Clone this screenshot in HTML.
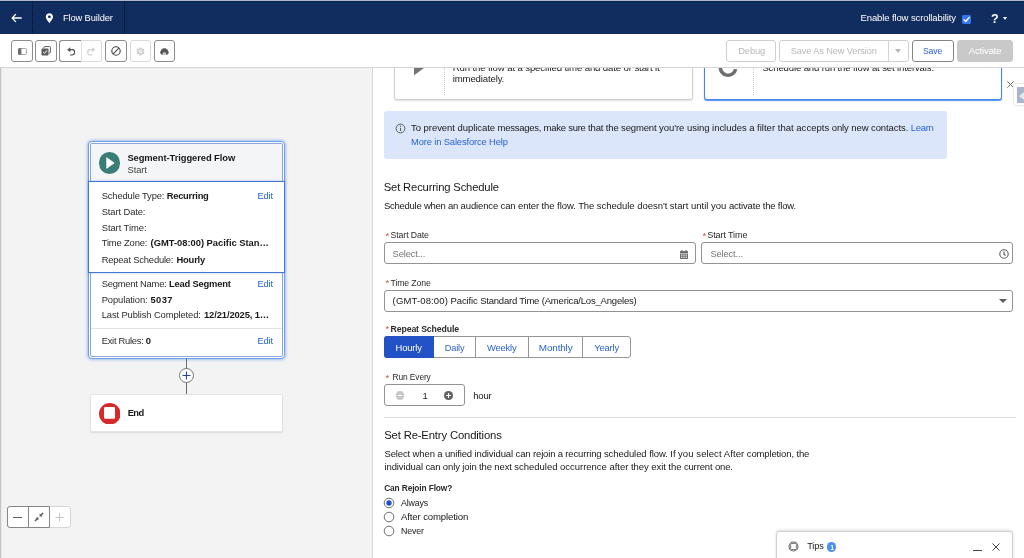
<!DOCTYPE html>
<html>
<head>
<meta charset="utf-8">
<title>Flow Builder</title>
<style>
*{box-sizing:border-box;margin:0;padding:0}
html,body{width:1024px;height:558px;overflow:hidden;background:#fff;font-family:"Liberation Sans",sans-serif;font-size:9px;color:#181818}
#root{position:absolute;left:0;top:0;width:1024px;height:558px;will-change:transform;opacity:.999}
.abs{position:absolute}
.t{position:absolute;white-space:nowrap;display:block}
#hdr{position:absolute;left:0;top:0;width:1024px;height:34px;background:#112c5e;border-top:1px solid #b1b8c7;box-shadow:inset 0 1px 0 #08255a}
#hdr .sep{position:absolute;top:0;height:33px;width:0;border-left:1px dotted #050f2a}
#tb{position:absolute;left:0;top:34px;width:1024px;height:34px;background:#fff;border-bottom:1px solid #d4d4d4}
.ib{position:absolute;top:6.2px;height:21.6px;border:1px solid #8c8c8c;border-radius:3px;background:#fff}
.ib.dis{border-color:#dadada}
.btn{position:absolute;top:6.2px;height:21.4px;border:1px solid #cfcfcf;border-radius:3px;background:#fff}
#canvas{position:absolute;left:0;top:68px;width:372px;height:490px;background:#f3f3f3;overflow:hidden;box-shadow:inset 1px 0 0 #c4c4c4, inset 2px 0 0 #e8e8e8}
#panel{position:absolute;left:372px;top:68px;width:652px;height:490px;background:#fff;overflow:hidden;box-shadow:inset 1px 0 0 #d8d8d8}
</style>
</head>
<body>
<div id="root">
<div id="hdr">
<div class="sep" style="left:32px"></div><div class="sep" style="left:124px"></div>
<svg class="abs" style="left:10.6px;top:11.8px" width="12" height="10" viewBox="0 0 12 10"><path d="M4.6 1.4 L1.2 5 L4.6 8.6 M1.4 5 H10.2" fill="none" stroke="#fff" stroke-width="1.3" stroke-linecap="round" stroke-linejoin="round"/></svg>
<svg class="abs" style="left:44.9px;top:12.1px" width="8.8" height="10.6" viewBox="0 0 9 12"><path d="M4.5 0.3C2.2 0.3 0.4 2.1 0.4 4.3c0 2.6 2.9 5.6 4.1 7.2 1.2-1.6 4.1-4.6 4.1-7.2C8.6 2.1 6.8 0.3 4.5 0.3z" fill="#fff"/><circle cx="4.5" cy="4.3" r="1.6" fill="#112c5e"/></svg>
<span class="t" style="left:63.0px;top:10.77px;font-size:9.32px;line-height:12px;letter-spacing:-0.125px;color:#fff;">Flow Builder</span>
<span class="t" style="left:860.5px;top:10.71px;font-size:9.5px;line-height:12px;letter-spacing:-0.114px;color:#fff;">Enable flow scrollability</span>
<div class="abs" style="left:962px;top:14px;width:9px;height:9px;background:#3476f2;border-radius:1.5px"></div>
<svg class="abs" style="left:962px;top:14px" width="9" height="9" viewBox="0 0 9 9"><path d="M2 4.7 L3.8 6.5 L7.2 2.4" fill="none" stroke="#fff" stroke-width="1.4" stroke-linecap="round" stroke-linejoin="round"/></svg>
<span class="t" style="left:991.0px;top:9.87px;font-size:12.5px;line-height:16px;font-weight:bold;color:#fff;">?</span>
<div class="abs" style="left:1002.6px;top:15.6px;width:0;height:0;border-left:2.6px solid transparent;border-right:2.6px solid transparent;border-top:3px solid #fff"></div>
</div>
<div id="tb">
<div class="ib " style="left:11.2px;width:21.5px"><svg width="9" height="7" viewBox="0 0 9 7" style="position:absolute;left:5.6px;top:6.8px"><rect x="0.5" y="0.5" width="8" height="6" rx="1" fill="#fff" stroke="#a8a8a8" stroke-width="1"/><path d="M1 0.2H3.4V6.8H1C.5 6.8 .1 6.4 .1 5.9V1.1C.1 .6 .5 .2 1 .2Z" fill="#6b6b6b"/></svg></div>
<div class="ib " style="left:35.4px;width:21.5px"><svg width="10" height="10" viewBox="0 0 10 10" style="position:absolute;left:5px;top:5px"><path d="M3 2.3V1.3C3 .9 3.3 .6 3.7 .6H8.7C9.1 .6 9.4 .9 9.4 1.3V6.3C9.4 6.7 9.1 7 8.7 7H7.8" fill="none" stroke="#5c5c5c" stroke-width="1"/><rect x="0.5" y="2.5" width="7" height="7" rx="0.8" fill="#5c5c5c"/><path d="M2.2 6 L3.6 7.4 L6 4.4" fill="none" stroke="#fff" stroke-width="1"/></svg></div>
<div class="ib" style="left:59.4px;width:21.8px;border-radius:3px 0 0 3px;border-right:none"><svg width="8.4" height="8.7" viewBox="0 0 8.4 8.7" style="position:absolute;left:6.2px;top:5.8px"><path d="M0.2 2.7L3.3 0.2V5.2Z" fill="#4f4f4f"/><path d="M2.6 2.7H5.1A2.65 2.65 0 0 1 5.1 8H3.5" fill="none" stroke="#4f4f4f" stroke-width="1.2" stroke-linecap="round"/></svg></div>
<div class="ib dis" style="left:80.7px;width:21px;border-radius:0 3px 3px 0;border-left:1px solid #e2e2e2"><svg width="8.4" height="8.7" viewBox="0 0 8.4 8.7" style="position:absolute;left:5.6px;top:5.8px"><path d="M8.2 2.7L5.1 0.2V5.2Z" fill="#d0d0d0"/><path d="M5.8 2.7H3.3A2.65 2.65 0 0 0 3.3 8H4.9" fill="none" stroke="#d0d0d0" stroke-width="1.2" stroke-linecap="round"/></svg></div>
<div class="ib " style="left:105.1px;width:21.5px"><svg width="10" height="10" viewBox="0 0 10 10" style="position:absolute;left:5px;top:5px"><circle cx="5" cy="5" r="4.2" fill="none" stroke="#444" stroke-width="1.1"/><path d="M2.1 7.9 L7.9 2.1" stroke="#444" stroke-width="1.1"/></svg></div>
<div class="ib dis" style="left:129.5px;width:21.5px"><svg width="9" height="9" viewBox="0 0 10 10" style="position:absolute;left:5.2px;top:5.4px"><g stroke="#cfcfcf" stroke-width="2.4"><path d="M5 .5V9.5M1.1 2.75L8.9 7.25M1.1 7.25L8.9 2.75"/></g><circle cx="5" cy="5" r="3.5" fill="#cfcfcf"/><circle cx="5" cy="5" r="2" fill="#f6f6f6"/><circle cx="5" cy="5" r=".9" fill="#d4d4d4"/></svg></div>
<div class="ib " style="left:153.9px;width:21.5px"><svg width="8.8" height="7.2" viewBox="0 0 8.6 7" style="position:absolute;left:5.4px;top:6.6px"><g fill="#585858"><circle cx="1.5" cy="4.3" r="1.45"/><circle cx="2.2" cy="2.7" r="1.4"/><circle cx="3.5" cy="1.7" r="1.35"/><circle cx="5.1" cy="1.7" r="1.35"/><circle cx="6.4" cy="2.7" r="1.4"/><circle cx="7.1" cy="4.3" r="1.45"/><ellipse cx="4.3" cy="3.8" rx="2.9" ry="2.6"/><circle cx="1.9" cy="5.7" r="1"/><circle cx="6.7" cy="5.7" r="1"/></g><ellipse cx="4.3" cy="5.5" rx="1.75" ry="1.45" fill="#d6d6d6"/><path d="M3.3 4.9L4.3 5.7L5.3 4.9" stroke="#7a7a7a" stroke-width=".5" fill="none"/></svg></div>
<div class="btn" style="left:726.3px;width:50px"></div>
<span class="t" style="left:738.3px;top:11.07px;font-size:9.33px;line-height:12px;letter-spacing:-0.16px;color:#b8b8b8;">Debug</span>
<div class="btn" style="left:779.4px;width:129.2px"></div>
<div class="abs" style="left:887.6px;top:6.3px;width:1px;height:21px;background:#d4d4d4"></div>
<span class="t" style="left:790.8px;top:11.09px;font-size:9.25px;line-height:12px;letter-spacing:-0.136px;color:#b8b8b8;">Save As New Version</span>
<div class="abs" style="left:894.8px;top:15.4px;width:0;height:0;border-left:3.3px solid transparent;border-right:3.3px solid transparent;border-top:4.2px solid #b8b8b8"></div>
<div class="btn" style="left:911.5px;width:42.6px;border-color:#858585"></div>
<span class="t" style="left:923.0px;top:11.81px;font-size:8.63px;line-height:11px;letter-spacing:-0.143px;color:#2b64ce;">Save</span>
<div class="btn" style="left:957.1px;width:55.7px;background:#c9c9c9;border-color:#c9c9c9"></div>
<span class="t" style="left:968.7px;top:11.01px;font-size:9.5px;line-height:12px;letter-spacing:-0.123px;color:#fff;">Activate</span>
</div>
<div id="canvas">
<div class="abs" style="left:88.2px;top:72.8px;width:196.6px;height:218.4px;border:1px solid #6f9eea;border-radius:4px;box-shadow:0 0 3px 1px rgba(70,130,240,.45);background:#fff"></div>
<div class="abs" style="left:90.2px;top:75.2px;width:192.6px;height:213.8px;border:1px solid #8aa6da;border-radius:2px;background:#fff"></div>
<div class="abs" style="left:91.2px;top:76.2px;width:190.6px;height:37.5px;background:#f4f5f7"></div>
<div class="abs" style="left:88.2px;top:113.0px;width:196.6px;height:92.2px;border:1px solid #4477d6;border-left-width:1.6px;border-right-width:1.6px;background:#fff;box-shadow:0 0 2px rgba(60,110,220,.45)"></div>
<div class="abs" style="left:91.2px;top:260.0px;width:190.6px;height:1.0px;background:#e2e2e2"></div>
<div class="abs" style="left:98.8px;top:84.2px;width:21.6px;height:21.6px;border-radius:50%;background:#3a7d77"></div>
<svg class="abs" style="left:105.6px;top:89.0px" width="9" height="12" viewBox="0 0 9 12"><path d="M0.6 0.6 L8.2 6 L0.6 11.4Z" fill="#fff" stroke="#fff" stroke-width=".6" stroke-linejoin="round"/></svg>
<span class="t" style="left:127.4px;top:83.54px;font-size:9.4px;line-height:12px;letter-spacing:-0.076px;font-weight:bold;">Segment-Triggered Flow</span>
<span class="t" style="left:127.6px;top:95.74px;font-size:9.4px;line-height:12px;letter-spacing:-0.11px;color:#3e3e3c;">Start</span>
<span class="t" style="left:101.7px;top:121.94px;font-size:9.4px;line-height:12px;letter-spacing:-0.131px;color:#2b2b2b;">Schedule Type:</span>
<span class="t" style="left:166.7px;top:121.94px;font-size:9.4px;line-height:12px;letter-spacing:-0.266px;font-weight:bold;">Recurring</span>
<span class="t" style="left:257.5px;top:121.94px;font-size:9.4px;line-height:12px;letter-spacing:-0.175px;color:#2b64ce;">Edit</span>
<span class="t" style="left:101.7px;top:137.84px;font-size:9.4px;line-height:12px;letter-spacing:-0.103px;color:#2b2b2b;">Start Date:</span>
<span class="t" style="left:101.7px;top:153.74px;font-size:9.4px;line-height:12px;letter-spacing:-0.05px;color:#2b2b2b;">Start Time:</span>
<span class="t" style="left:101.7px;top:169.44px;font-size:9.4px;line-height:12px;letter-spacing:-0.149px;color:#2b2b2b;">Time Zone:</span>
<span class="t" style="left:150.6px;top:169.44px;font-size:9.4px;line-height:12px;letter-spacing:-0.02px;font-weight:bold;">(GMT-08:00) Pacific Stan…</span>
<span class="t" style="left:101.7px;top:185.54px;font-size:9.4px;line-height:12px;letter-spacing:-0.183px;color:#2b2b2b;">Repeat Schedule:</span>
<span class="t" style="left:176.4px;top:185.54px;font-size:9.4px;line-height:12px;letter-spacing:-0.162px;font-weight:bold;">Hourly</span>
<span class="t" style="left:101.7px;top:209.74px;font-size:9.4px;line-height:12px;letter-spacing:-0.225px;color:#2b2b2b;">Segment Name:</span>
<span class="t" style="left:168.9px;top:209.74px;font-size:9.4px;line-height:12px;letter-spacing:-0.188px;font-weight:bold;">Lead Segment</span>
<span class="t" style="left:257.5px;top:209.74px;font-size:9.4px;line-height:12px;letter-spacing:-0.175px;color:#2b64ce;">Edit</span>
<span class="t" style="left:101.7px;top:225.74px;font-size:9.4px;line-height:12px;letter-spacing:-0.094px;color:#2b2b2b;">Population:</span>
<span class="t" style="left:150.5px;top:225.74px;font-size:9.4px;line-height:12px;letter-spacing:0.397px;font-weight:bold;">5037</span>
<span class="t" style="left:101.7px;top:241.44px;font-size:9.4px;line-height:12px;letter-spacing:-0.108px;color:#2b2b2b;">Last Publish Completed:</span>
<span class="t" style="left:204.0px;top:241.44px;font-size:9.4px;line-height:12px;letter-spacing:-0.114px;font-weight:bold;">12/21/2025, 1…</span>
<span class="t" style="left:101.7px;top:266.94px;font-size:9.4px;line-height:12px;letter-spacing:-0.275px;color:#2b2b2b;">Exit Rules:</span>
<span class="t" style="left:145.8px;top:266.94px;font-size:9.4px;line-height:12px;letter-spacing:-0.028px;font-weight:bold;">0</span>
<span class="t" style="left:257.5px;top:266.94px;font-size:9.4px;line-height:12px;letter-spacing:-0.175px;color:#2b64ce;">Edit</span>
<div class="abs" style="left:185.9px;top:290.4px;width:1.3px;height:36.0px;background:#6b6b6b"></div>
<div class="abs" style="left:178.8px;top:299.9px;width:15.6px;height:15.6px;border-radius:50%;background:#fff;border:1px solid #747474"></div>
<svg class="abs" style="left:182.1px;top:303.2px" width="9" height="9" viewBox="0 0 9 9"><path d="M4.5 0.5V8.5M0.5 4.5H8.5" stroke="#23438f" stroke-width="1.1"/></svg>
<div class="abs" style="left:90.2px;top:326.2px;width:193.0px;height:38.2px;border:1px solid #e3e3e3;border-radius:2px;background:#fff;box-shadow:0 1px 1.5px rgba(0,0,0,.1)"></div>
<svg class="abs" style="left:98.7px;top:334.5px" width="21.6" height="21.6" viewBox="0 0 21.6 21.6"><circle cx="10.8" cy="10.8" r="10.8" fill="#d5292c"/></svg>
<svg class="abs" style="left:103.8px;top:339.3px" width="11.2" height="11.8" viewBox="0 0 11.2 11.8"><rect x="0" y="0" width="11.2" height="11.8" rx="1.2" fill="#fff"/></svg>
<span class="t" style="left:127.7px;top:339.14px;font-size:9.4px;line-height:12px;letter-spacing:-0.585px;font-weight:bold;">End</span>
<div class="abs" style="left:7.0px;top:438.4px;width:64.0px;height:21.4px;border:1px solid #d6d6d6;border-radius:3px;background:#fff"></div>
<div class="abs" style="left:7.0px;top:438.4px;width:42.6px;height:21.4px;border:1px solid #868686;border-radius:3px 0 0 3px;background:#fff"></div>
<div class="abs" style="left:28.0px;top:438.4px;width:1.0px;height:21.4px;background:#868686"></div>
<div class="abs" style="left:13.4px;top:448.6px;width:9.0px;height:1.0px;background:#5c5c5c"></div>
<svg class="abs" style="left:33.5px;top:444.0px" width="10" height="10" viewBox="0 0 10 10"><g fill="#555"><path d="M5.6 4.4V1.6L6.5 2.5L8.6 .4L9.6 1.4L7.5 3.5L8.4 4.4Z"/><path d="M4.4 5.6V8.4L3.5 7.5L1.4 9.6L.4 8.6L2.5 6.5L1.6 5.6Z"/></g></svg>
<svg class="abs" style="left:55.3px;top:444.7px" width="9" height="9" viewBox="0 0 9 9"><path d="M4.5 0.5V8.5M0.5 4.5H8.5" stroke="#c4c4c4" stroke-width="1"/></svg>
</div>
<div id="panel">
<div class="abs" style="left:22.2px;top:-28.0px;width:298.4px;height:59.5px;border:1px solid #d0d0d0;border-radius:3px;background:#fff;box-shadow:0 1px 1.5px rgba(0,0,0,.12)"></div>
<div class="abs" style="left:72.0px;top:-18.0px;width:0.0px;height:44.7px;border-left:1px dotted #cacaca"></div>
<svg class="abs" style="left:42.4px;top:-8.2px" width="10.4" height="15.4" viewBox="0 0 10.4 15.4"><path d="M0 0L10.4 7.7L0 15.4Z" fill="#757575"/></svg>
<span class="t" style="left:80.8px;top:-5.82px;font-size:9.58px;line-height:12px;letter-spacing:-0.117px;">Run the flow at a specified time and date or start it</span>
<span class="t" style="left:80.8px;top:4.79px;font-size:9.56px;line-height:12px;letter-spacing:-0.128px;">immediately.</span>
<div class="abs" style="left:332.4px;top:-28.0px;width:298.0px;height:59.8px;border:1px solid #3f86f2;border-radius:3px;background:#fff;box-shadow:0 0.5px 1px rgba(63,134,242,.9)"></div>
<div class="abs" style="left:381.0px;top:-18.0px;width:0.0px;height:44.7px;border-left:1px dotted #cacaca"></div>
<svg class="abs" style="left:344.4px;top:-12.3px" width="24" height="24" viewBox="0 0 24 24"><path d="M19.67 13.08A7.75 7.75 0 0 1 4.4 10.5" fill="none" stroke="#6e6e6e" stroke-width="3.5"/></svg>
<span class="t" style="left:390.4px;top:-5.80px;font-size:9.52px;line-height:12px;letter-spacing:-0.12px;">Schedule and run the flow at set intervals.</span>
<svg class="abs" style="left:634.9px;top:13.2px" width="7" height="7" viewBox="0 0 7 7"><path d="M.3 .3L6.7 6.7M6.7 .3L.3 6.7" stroke="#5c5c5c" stroke-width=".9"/></svg>
<div class="abs" style="left:641.0px;top:15.0px;width:14.0px;height:23.0px;background:#fff;border:1px solid #ececf0;border-radius:3px 0 0 3px;box-shadow:0 0 2px rgba(0,0,0,.08)"></div>
<div class="abs" style="left:645.0px;top:18.5px;width:8.0px;height:16.3px;background:#a9b5cd"></div>
<div class="abs" style="left:647.2px;top:23.6px;width:0;height:0;border-top:4.2px solid transparent;border-bottom:4.2px solid transparent;border-right:5.5px solid #e4e8f0"></div>
<div class="abs" style="left:11.8px;top:42.8px;width:563.2px;height:48.2px;background:#dbe6fa;border-radius:3px"></div>
<svg class="abs" style="left:22.5px;top:55.3px" width="11" height="11" viewBox="0 0 11 11"><circle cx="5.5" cy="5.5" r="4.4" fill="none" stroke="#5c5c5c" stroke-width="1"/><path d="M5.5 4.8V8" stroke="#5c5c5c" stroke-width="1.1"/><circle cx="5.5" cy="3.3" r=".7" fill="#5c5c5c"/></svg>
<span class="t" style="left:39.0px;top:54.21px;font-size:9.5px;line-height:12px;letter-spacing:-0.046px;">To prevent duplicate</span><span class="t" style="left:125.6px;top:54.21px;font-size:9.5px;line-height:12px;letter-spacing:-0.259px;">messages, make sure</span><span class="t" style="left:216.1px;top:54.21px;font-size:9.5px;line-height:12px;letter-spacing:-0.148px;">that the segment</span><span class="t" style="left:287.0px;top:54.21px;font-size:9.5px;line-height:12px;letter-spacing:-0.037px;">you're using includes a</span><span class="t" style="left:385.0px;top:54.21px;font-size:9.5px;line-height:12px;letter-spacing:0.02px;">filter that accepts</span><span class="t" style="left:459.7px;top:54.21px;font-size:9.5px;line-height:12px;letter-spacing:-0.092px;">only new contacts.</span>
<span class="t" style="left:538.8px;top:54.21px;font-size:9.5px;line-height:12px;letter-spacing:-0.3px;color:#2b64ce;">Learn</span>
<span class="t" style="left:39.0px;top:67.66px;font-size:9.35px;line-height:12px;letter-spacing:-0.126px;color:#2b64ce;">More in Salesforce Help</span>
<span class="t" style="left:11.8px;top:112.21px;font-size:11.23px;line-height:15px;letter-spacing:-0.157px;">Set Recurring Schedule</span>
<span class="t" style="left:11.9px;top:132.31px;font-size:9.5px;line-height:12px;letter-spacing:-0.248px;">Schedule when an</span><span class="t" style="left:88.6px;top:132.31px;font-size:9.5px;line-height:12px;letter-spacing:-0.134px;">audience can enter</span><span class="t" style="left:169.5px;top:132.31px;font-size:9.5px;line-height:12px;letter-spacing:-0.069px;">the flow. The</span><span class="t" style="left:224.8px;top:132.31px;font-size:9.5px;line-height:12px;letter-spacing:-0.032px;">schedule doesn't</span><span class="t" style="left:297.8px;top:132.31px;font-size:9.5px;line-height:12px;letter-spacing:0.007px;">start until you</span><span class="t" style="left:356.9px;top:132.31px;font-size:9.5px;line-height:12px;letter-spacing:-0.174px;">activate the flow.</span>
<span class="t" style="left:13.4px;top:161.61px;font-size:9.5px;line-height:12px;color:#d4504c;">*</span>
<span class="t" style="left:18.6px;top:162.08px;font-size:8.72px;line-height:11px;letter-spacing:-0.114px;color:#2b2b2b;">Start Date</span>
<span class="t" style="left:330.5px;top:161.61px;font-size:9.5px;line-height:12px;color:#d4504c;">*</span>
<span class="t" style="left:335.2px;top:161.44px;font-size:9.11px;line-height:12px;letter-spacing:-0.121px;color:#2b2b2b;">Start Time</span>
<div class="abs" style="left:11.8px;top:174.2px;width:312.0px;height:21.7px;border:1px solid #939393;border-radius:3px;background:#fff"></div>
<div class="abs" style="left:329.2px;top:174.2px;width:311.8px;height:21.7px;border:1px solid #939393;border-radius:3px;background:#fff"></div>
<span class="t" style="left:20.6px;top:179.88px;font-size:9.29px;line-height:12px;letter-spacing:-0.109px;color:#747474;">Select...</span>
<span class="t" style="left:338.4px;top:179.88px;font-size:9.29px;line-height:12px;letter-spacing:-0.109px;color:#747474;">Select...</span>
<svg class="abs" style="left:308.0px;top:182.0px" width="8" height="9" viewBox="0 0 8 9"><g fill="#6a6a6a"><rect x="1.4" y="0" width="1.1" height="1.8"/><rect x="5.5" y="0" width="1.1" height="1.8"/><path d="M.7 1H7.3C7.7 1 8 1.3 8 1.7V3H0V1.7C0 1.3 .3 1 .7 1Z"/><path d="M0 3.6H8V8.2C8 8.6 7.7 8.9 7.3 8.9H.7C.3 8.9 0 8.6 0 8.2Z"/></g><g fill="#fff"><rect x="1.1" y="4.5" width="1.3" height="1.2"/><rect x="3.35" y="4.5" width="1.3" height="1.2"/><rect x="5.6" y="4.5" width="1.3" height="1.2"/><rect x="1.1" y="6.6" width="1.3" height="1.2"/><rect x="3.35" y="6.6" width="1.3" height="1.2"/><rect x="5.6" y="6.6" width="1.3" height="1.2"/></g></svg>
<svg class="abs" style="left:626.6px;top:180.6px" width="10" height="10" viewBox="0 0 10 10"><circle cx="5" cy="5" r="4.2" fill="none" stroke="#5c5c5c" stroke-width="1.1"/><path d="M5 2.4V5.2L6.5 6.5" fill="none" stroke="#5c5c5c" stroke-width="1.2"/></svg>
<span class="t" style="left:13.4px;top:209.11px;font-size:9.5px;line-height:12px;color:#d4504c;">*</span>
<span class="t" style="left:18.6px;top:209.58px;font-size:8.71px;line-height:11px;letter-spacing:-0.134px;color:#2b2b2b;">Time Zone</span>
<div class="abs" style="left:11.8px;top:222.0px;width:629.2px;height:21.6px;border:1px solid #939393;border-radius:3px;background:#fff"></div>
<span class="t" style="left:20.6px;top:226.91px;font-size:9.5px;line-height:12px;letter-spacing:0.141px;">(GMT-08:00)</span><span class="t" style="left:78.5px;top:226.91px;font-size:9.5px;line-height:12px;letter-spacing:-0.112px;">Pacific</span><span class="t" style="left:108.2px;top:226.91px;font-size:9.5px;line-height:12px;letter-spacing:-0.214px;">Standard Time</span><span class="t" style="left:169.7px;top:226.91px;font-size:9.5px;line-height:12px;letter-spacing:-0.183px;">(America/Los_Angeles)</span>
<div class="abs" style="left:627.0px;top:231.3px;width:0;height:0;border-left:4px solid transparent;border-right:4px solid transparent;border-top:4.6px solid #5c5c5c"></div>
<span class="t" style="left:13.4px;top:255.41px;font-size:9.5px;line-height:12px;color:#d4504c;">*</span>
<span class="t" style="left:18.6px;top:255.87px;font-size:8.74px;line-height:11px;letter-spacing:-0.137px;font-weight:bold;color:#2b2b2b;">Repeat Schedule</span>
<div class="abs" style="left:11.8px;top:268.4px;width:246.9px;height:22.0px;border:1px solid #959595;border-radius:3px;background:#fff"></div>
<div class="abs" style="left:11.8px;top:268.4px;width:50.0px;height:22.0px;background:#2352c6;border-radius:3px 0 0 3px"></div>
<div class="abs" style="left:103.2px;top:269.0px;width:1.0px;height:21.0px;background:#959595"></div>
<div class="abs" style="left:155.5px;top:269.0px;width:1.0px;height:21.0px;background:#959595"></div>
<div class="abs" style="left:210.4px;top:269.0px;width:1.0px;height:21.0px;background:#959595"></div>
<span class="t" style="left:23.5px;top:273.74px;font-size:9.41px;line-height:12px;letter-spacing:-0.132px;color:#fff;">Hourly</span>
<span class="t" style="left:72.7px;top:273.82px;font-size:9.18px;line-height:12px;letter-spacing:-0.119px;color:#2b64ce;">Daily</span>
<span class="t" style="left:114.9px;top:273.75px;font-size:9.38px;line-height:12px;letter-spacing:-0.148px;color:#2b64ce;">Weekly</span>
<span class="t" style="left:166.8px;top:273.07px;font-size:9.91px;line-height:13px;letter-spacing:-0.144px;color:#2b64ce;">Monthly</span>
<span class="t" style="left:222.2px;top:273.76px;font-size:9.35px;line-height:12px;letter-spacing:-0.124px;color:#2b64ce;">Yearly</span>
<span class="t" style="left:13.4px;top:303.61px;font-size:9.5px;line-height:12px;color:#d4504c;">*</span>
<span class="t" style="left:20.6px;top:304.19px;font-size:8.41px;line-height:11px;letter-spacing:-0.127px;color:#2b2b2b;">Run Every</span>
<div class="abs" style="left:11.8px;top:316.4px;width:81.0px;height:21.2px;border:1px solid #939393;border-radius:3px;background:#fff"></div>
<div class="abs" style="left:23.5px;top:323.2px;width:8.6px;height:8.6px;border-radius:50%;background:#c9c9c9"></div>
<div class="abs" style="left:25.6px;top:327.0px;width:4.4px;height:1.1px;background:#fff"></div>
<div class="abs" style="left:72.3px;top:323.2px;width:8.6px;height:8.6px;border-radius:50%;background:#626262"></div>
<div class="abs" style="left:74.4px;top:327.0px;width:4.4px;height:1.1px;background:#fff"></div>
<div class="abs" style="left:76.1px;top:325.3px;width:1.1px;height:4.4px;background:#fff"></div>
<span class="t" style="left:50.6px;top:321.84px;font-size:9.4px;line-height:12px;">1</span>
<span class="t" style="left:101.2px;top:321.82px;font-size:9.47px;line-height:12px;letter-spacing:-0.138px;">hour</span>
<div class="abs" style="left:11.8px;top:349.0px;width:632.0px;height:1.0px;background:#e0e0e0"></div>
<span class="t" style="left:12.2px;top:359.69px;font-size:11.29px;line-height:15px;letter-spacing:-0.153px;">Set Re-Entry Conditions</span>
<span class="t" style="left:12.5px;top:379.71px;font-size:9.5px;line-height:12px;letter-spacing:-0.134px;">Select when a unified</span><span class="t" style="left:102.5px;top:379.71px;font-size:9.5px;line-height:12px;letter-spacing:-0.112px;">individual can</span><span class="t" style="left:161.0px;top:379.71px;font-size:9.5px;line-height:12px;letter-spacing:-0.16px;">rejoin a recurring</span><span class="t" style="left:231.9px;top:379.71px;font-size:9.5px;line-height:12px;letter-spacing:-0.071px;">scheduled flow. If</span><span class="t" style="left:306.0px;top:379.71px;font-size:9.5px;line-height:12px;letter-spacing:0.084px;">you select After</span><span class="t" style="left:374.8px;top:379.71px;font-size:9.5px;line-height:12px;letter-spacing:-0.135px;">completion, the</span>
<span class="t" style="left:12.5px;top:393.01px;font-size:9.5px;line-height:12px;letter-spacing:-0.123px;">individual can only</span><span class="t" style="left:90.3px;top:393.01px;font-size:9.5px;line-height:12px;letter-spacing:-0.133px;">join the next</span><span class="t" style="left:142.3px;top:393.01px;font-size:9.5px;line-height:12px;letter-spacing:-0.013px;">scheduled</span><span class="t" style="left:188.0px;top:393.01px;font-size:9.5px;line-height:12px;letter-spacing:-0.015px;">occurrence after</span><span class="t" style="left:258.9px;top:393.01px;font-size:9.5px;line-height:12px;letter-spacing:-0.056px;">they exit the</span><span class="t" style="left:311.9px;top:393.01px;font-size:9.5px;line-height:12px;letter-spacing:-0.15px;">current one.</span>
<span class="t" style="left:12.2px;top:414.80px;font-size:8.36px;line-height:11px;letter-spacing:-0.128px;font-weight:bold;color:#2b2b2b;">Can Rejoin Flow?</span>
<svg class="abs" style="left:11.0px;top:428.9px" width="12" height="12" viewBox="0 0 12 12"><circle cx="6" cy="6" r="4.8" fill="#fff" stroke="#6e6e6e" stroke-width="1"/><circle cx="6" cy="6" r="2.7" fill="#2352c6"/></svg>
<span class="t" style="left:29.0px;top:429.55px;font-size:8.81px;line-height:11px;letter-spacing:-0.136px;">Always</span>
<svg class="abs" style="left:11.0px;top:443.2px" width="12" height="12" viewBox="0 0 12 12"><circle cx="6" cy="6" r="4.8" fill="#fff" stroke="#6e6e6e" stroke-width="1"/></svg>
<span class="t" style="left:29.0px;top:442.98px;font-size:9.58px;line-height:12px;letter-spacing:-0.126px;">After completion</span>
<svg class="abs" style="left:11.0px;top:457.4px" width="12" height="12" viewBox="0 0 12 12"><circle cx="6" cy="6" r="4.8" fill="#fff" stroke="#6e6e6e" stroke-width="1"/></svg>
<span class="t" style="left:29.0px;top:458.15px;font-size:8.8px;line-height:11px;letter-spacing:-0.137px;">Never</span>
<div class="abs" style="left:404.2px;top:463.2px;width:236.6px;height:40.0px;border:1px solid #d2d2d2;border-radius:3px 3px 0 0;background:#fff;box-shadow:0 -1px 3px rgba(0,0,0,.14)"></div>
<svg class="abs" style="left:415.6px;top:472.7px" width="11" height="11" viewBox="0 0 11 11"><circle cx="5.5" cy="5.5" r="4.5" fill="none" stroke="#666" stroke-width="1.1"/><rect x="2.65" y="2.45" width="5.7" height="6.1" rx="1" fill="none" stroke="#6a6a6a" stroke-width=".9"/></svg>
<span class="t" style="left:435.2px;top:472.12px;font-size:9.18px;line-height:12px;letter-spacing:-0.124px;">Tips</span>
<div class="abs" style="left:455.3px;top:474.4px;width:9.2px;height:9.2px;border-radius:50%;background:#4a8ff7"></div>
<span class="t" style="left:458.2px;top:474.87px;font-size:7px;line-height:9px;font-weight:bold;color:#fff;">1</span>
<div class="abs" style="left:601.0px;top:481.8px;width:9.0px;height:1.0px;background:#444"></div>
<svg class="abs" style="left:620.4px;top:474.7px" width="8" height="8" viewBox="0 0 8 8"><path d="M.5 .5L7.5 7.5M7.5 .5L.5 7.5" stroke="#444" stroke-width="1"/></svg>
</div>
</div>
</body>
</html>
